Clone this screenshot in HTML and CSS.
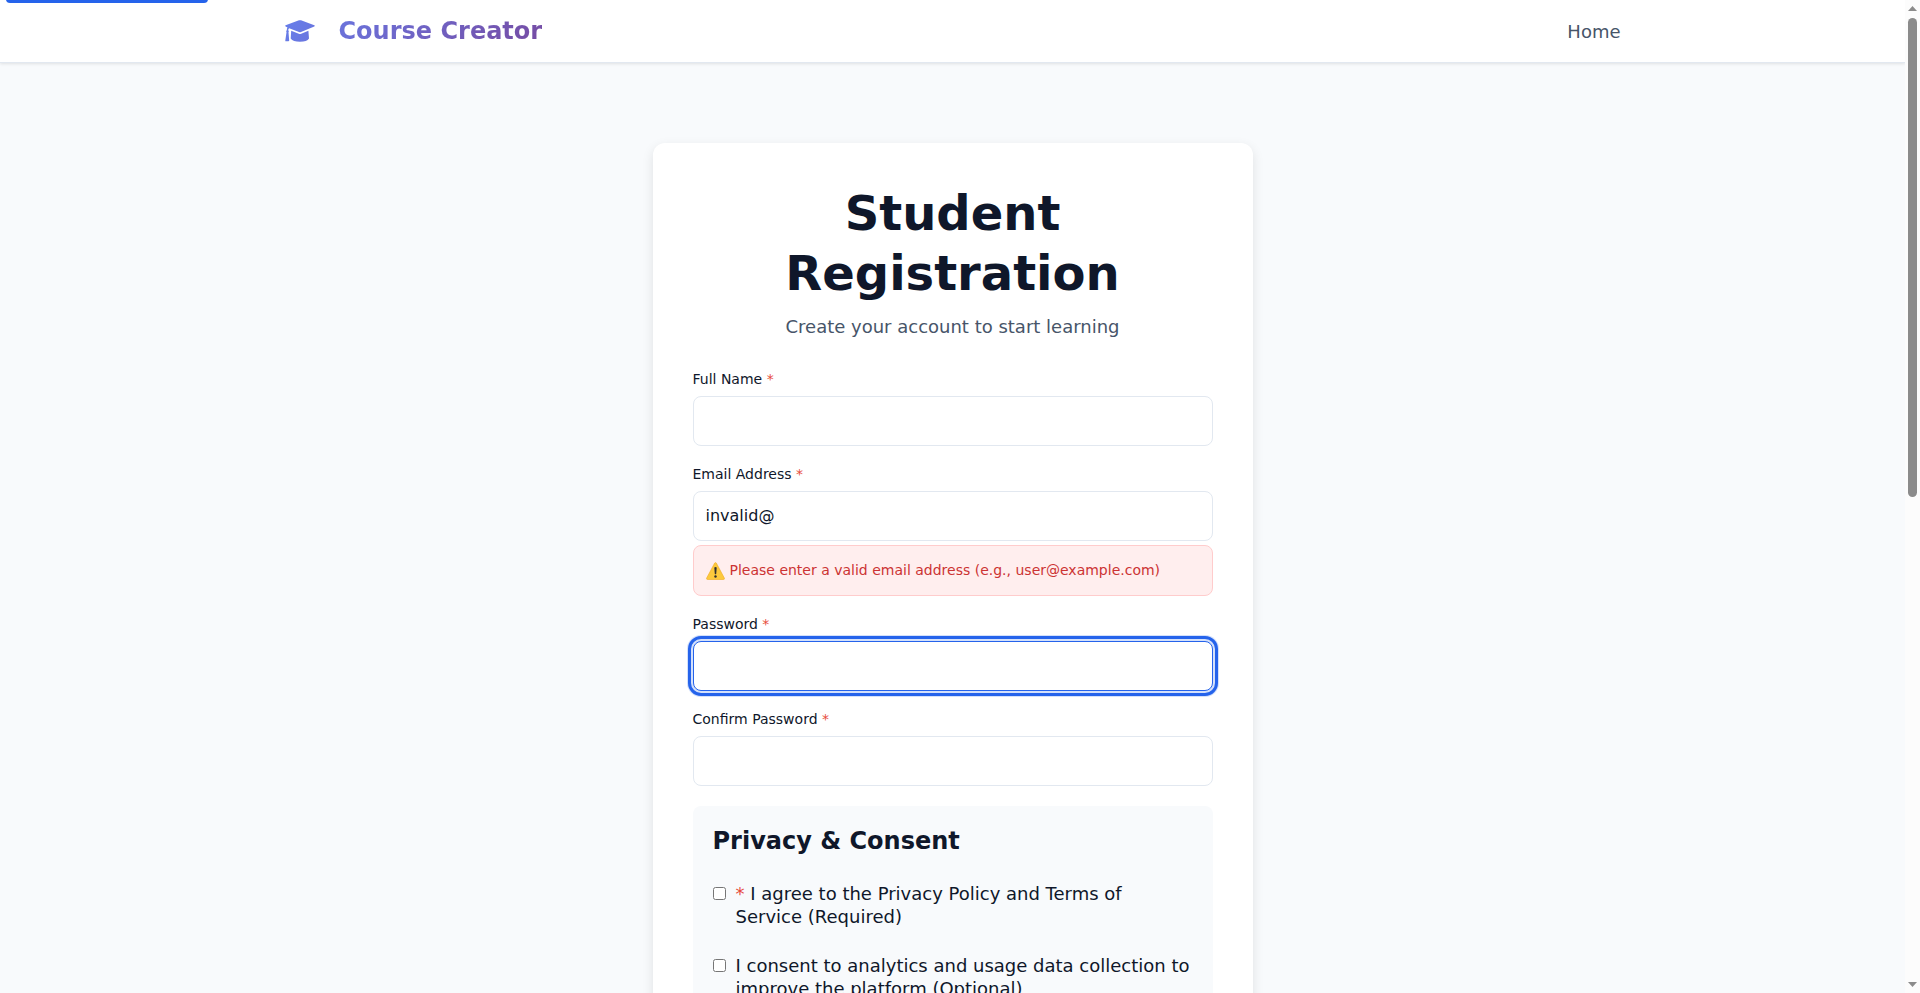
FILE: index.html
```html
<!DOCTYPE html>
<html lang="en">
<head>
<meta charset="utf-8">
<meta name="viewport" content="width=device-width, initial-scale=1">
<title>Student Registration - Course Creator</title>
<link rel="stylesheet" href="styles.css">
</head>
<body>
<div class="page">
  <a class="skip-link" href="#main">Skip to main content</a>
  <header class="site-header">
    <div class="header-inner">
      <a class="logo" href="#">
        <svg class="logo-icon" viewBox="0 0 30 22" aria-hidden="true">
          <defs><linearGradient id="cap" gradientUnits="userSpaceOnUse" x1="0" y1="0" x2="30" y2="22"><stop offset="0" stop-color="#667eea"/><stop offset="1" stop-color="#6a74dd"/></linearGradient></defs>
          <g fill="url(#cap)">
            <path d="M14 .3Q15 0 16 .3L29.300 5.200Q30.300 5.800 29.300 6.400L16 12Q15 12.400 14 12L4.200 8.200Q3.300 8.500 3.200 10.200Q4.300 11 3.500 12.300L4.200 20.500Q4.200 21.300 3.400 21.300H.9Q.2 21.300.3 20.500L1.500 12.300Q.8 11 1.800 10.200Q1.800 8.300 2.500 7.500L.6 6.400Q-.2 5.800.6 5.200Z"/>
            <path d="M6.200 10.700L13.800 13.800Q15 14.200 16.200 13.800L23.400 10.700L24 18.500Q22 21.800 15 21.800T5.700 18.500Z"/>
          </g>
        </svg>
        <span class="logo-text">Course Creator</span>
      </a>
      <nav aria-label="Main"><a class="nav-link" href="#">Home</a></nav>
    </div>
  </header>
  <main class="main" id="main">
    <section class="card">
      <h1 class="title">Student Registration</h1>
      <p class="subtitle">Create your account to start learning</p>
      <form class="form" novalidate>
        <div class="field">
          <label class="label" for="name">Full Name <span class="required">*</span></label>
          <input class="input" id="name" type="text">
        </div>
        <div class="field">
          <label class="label" for="email">Email Address <span class="required">*</span></label>
          <input class="input" id="email" type="email" value="invalid@" aria-describedby="email-error">
          <div class="error" id="email-error" role="alert">
            <svg class="warning-icon" viewBox="0 0 19 18" aria-hidden="true">
              <path fill="#fcc93c" stroke="#f2a91c" stroke-width=".6" stroke-linejoin="round" d="M8.700 1Q9.500-.2 10.300 1L18.300 16Q18.800 17.500 17.500 17.500H1.500Q.2 17.500.7 16Z"/>
              <path fill="#2f2f2f" d="M8.300 5.400Q9.500 4.600 10.700 5.400L10.200 12Q9.500 12.700 8.800 12Z"/>
              <circle cx="9.500" cy="14.500" r="1.200" fill="#2f2f2f"/>
            </svg>
            <span>Please enter a valid email address (e.g., user@example.com)</span>
          </div>
        </div>
        <div class="field">
          <label class="label" for="password">Password <span class="required">*</span></label>
          <input class="input input-active" id="password" type="password">
        </div>
        <div class="field">
          <label class="label" for="confirm">Confirm Password <span class="required">*</span></label>
          <input class="input" id="confirm" type="password">
        </div>
        <section class="consent">
          <h2 class="consent-title">Privacy &amp; Consent</h2>
          <div class="check">
            <input class="checkbox" id="terms" type="checkbox">
            <label for="terms"><span class="required">*</span> I agree to the Privacy Policy and Terms of Service (Required)</label>
          </div>
          <div class="check">
            <input class="checkbox" id="analytics" type="checkbox">
            <label for="analytics">I consent to analytics and usage data collection to improve the platform (Optional)</label>
          </div>
        </section>
      </form>
    </section>
  </main>
</div>
<div class="scrollbar" aria-hidden="true">
  <svg class="arrow" viewBox="0 0 9 5"><path fill="#8b8b8b" d="M4.500 0 9 5H0z"/></svg>
  <div class="track"><div class="thumb"></div></div>
  <svg class="arrow" viewBox="0 0 9 5"><path fill="#8b8b8b" d="M0 0H9L4.500 5z"/></svg>
</div>
</body>
</html>
```

FILE: styles.css
```css
* { box-sizing: border-box; }

body {
  margin: 0;
  display: flex;
  height: 100vh;
  overflow: hidden;
  background: #f8fafc;
  color: #0f172a;
  font-family: "DejaVu Sans", sans-serif;
  font-size: 18px;
}

.page {
  position: relative;
  flex: 1;
  min-width: 0;
  overflow: hidden;
}

.skip-link {
  position: absolute;
  top: -34px;
  left: 6px;
  padding: 8px 4px;
  width: 202px;
  border-radius: 0 0 4px 4px;
  background: #2563eb;
  color: #fff;
  line-height: 21px;
  text-align: center;
  text-decoration: none;
  white-space: nowrap;
}

.site-header {
  background: #fff;
  border-bottom: 1px solid #e2e8f0;
  box-shadow: 0 1px 3px rgba(0, 0, 0, 0.1);
}

.header-inner {
  display: flex;
  align-items: center;
  justify-content: space-between;
  max-width: 1400px;
  margin: 0 auto;
  padding: 16px 32px;
}

.logo {
  display: flex;
  align-items: center;
  gap: 24px;
  text-decoration: none;
}

.logo-icon { width: 30px; height: 22px; }

.logo-text {
  background: linear-gradient(135deg, #6a74dd, #764ba2);
  background-clip: text;
  -webkit-background-clip: text;
  color: transparent;
  font-size: 24px;
  font-weight: 700;
  line-height: 30px;
}

.nav-link { color: #475569; text-decoration: none; }

.skip-link { top: -34px; }

.main { padding: 80px 20px; }

.card {
  max-width: 600px;
  margin: 0 auto;
  padding: 40px;
  border-radius: 12px;
  background: #fff;
  box-shadow: 0 4px 12px rgba(0, 0, 0, 0.1);
}

.title {
  margin: 0 0 12px;
  font-size: 48px;
  line-height: 60px;
  text-align: center;
}

.subtitle {
  margin: 0 0 32px;
  color: #475569;
  line-height: 24px;
  text-align: center;
}

.form {
  display: flex;
  flex-direction: column;
  gap: 20px;
}

.field { display: flex; flex-direction: column; }

.label {
  margin-bottom: 8px;
  font-size: 14px;
  line-height: 17px;
}

.required { color: #e74c3c; }

.input {
  width: 100%;
  height: 50px;
  padding: 12px 12px 14px;
  border: 1px solid #e2e8f0;
  border-radius: 8px;
  background: #fff;
  color: #0f172a;
  font: 16px "DejaVu Sans", sans-serif;
}

.input-active,
.input:focus {
  border-color: #2563eb;
  outline: 3px solid #2563eb;
  outline-offset: 2px;
  box-shadow: 0 0 0 6px rgba(37, 99, 235, 0.2);
}

.error {
  display: flex;
  align-items: center;
  gap: 5px;
  margin-top: 4px;
  padding: 12px;
  border: 1px solid #fcc;
  border-radius: 8px;
  background: #fee;
  color: #c33;
  font-size: 14px;
  line-height: 25px;
}

.warning-icon { width: 19px; height: 18px; }

.consent {
  display: flex;
  flex-direction: column;
  gap: 26px;
  padding: 20px;
  border-radius: 8px;
  background: #f8fafc;
}

.consent-title {
  margin: 0;
  font-size: 24px;
  line-height: 30px;
}

.check {
  display: flex;
  align-items: flex-start;
  gap: 10px;
  line-height: 23px;
}

.checkbox {
  flex: none;
  width: 13px;
  height: 13px;
  margin: 5px 0 0;
}

.scrollbar {
  display: flex;
  flex-direction: column;
  align-items: center;
  gap: 7px;
  width: 15px;
  padding: 6px 0;
  background: #fcfcfc;
}

.arrow { width: 9px; height: 5px; }

.track { flex: 1; }

.thumb {
  width: 9px;
  height: 50%;
  border-radius: 5px;
  background: #8b8b8b;
}
```
